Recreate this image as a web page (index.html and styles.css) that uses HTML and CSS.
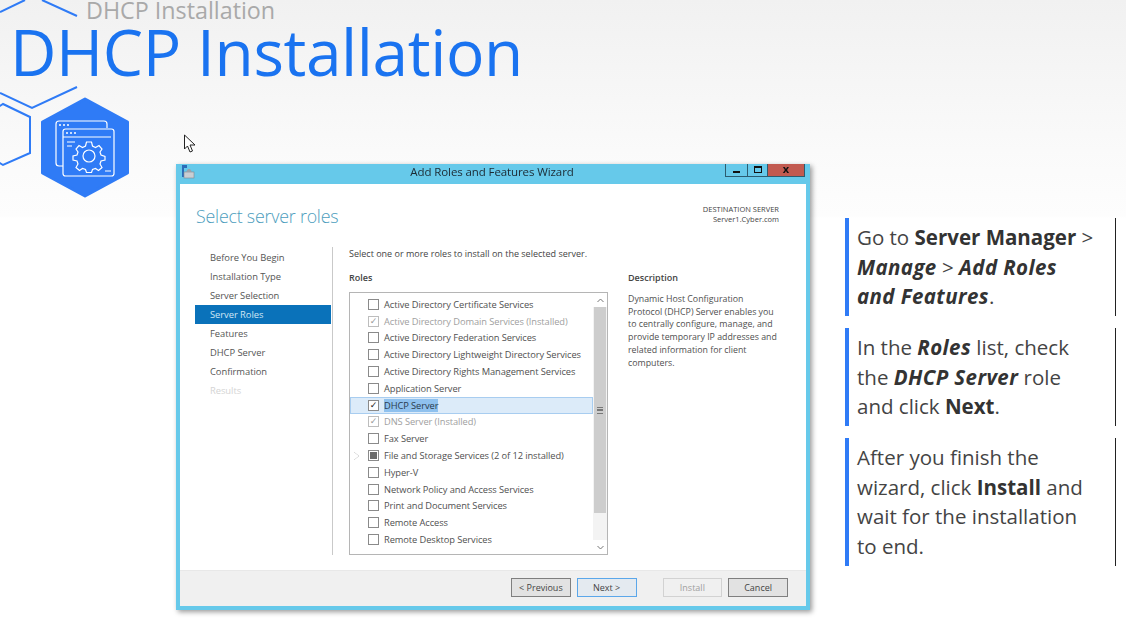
FILE: index.html
```html
<!DOCTYPE html>
<html lang="en">
<head>
<meta charset="utf-8">
<title>DHCP Installation</title>
<link rel="stylesheet" href="styles.css">
</head>
<body>
<div class="slide">
  <svg class="deco" width="135" height="205" viewBox="0 0 135 205" aria-hidden="true">
    <g fill="none" stroke="#2f7bf6" stroke-width="2">
      <path d="M0 12 25 0M42 0 77 16"/>
      <path d="M0 93 32 108 77 87"/>
      <path d="M-2 107 3 104 30 117V153L3 165-2 162"/>
    </g>
    <path d="M85 99 127.500 122V173L85 196 42.500 173V122Z" fill="#2f7bf6" stroke="#2f7bf6" stroke-width="3" stroke-linejoin="round"/>
    <g fill="none" stroke="#fff" stroke-width="1.2">
      <path d="M63 166H59Q56 166 56 163V124Q56 121 59 121H104Q107 121 107 124V128"/>
      <rect x="63" y="129" width="51" height="47" rx="2.5"/>
      <path d="M63 137H111M67 142H75M67 146H72M105 171H111"/>
      <circle cx="89" cy="156" r="6"/>
      <path d="M86.500 142H91.500L92.500 146 95.500 147.500 99 145.500 102 149 100 152 101 155 105 156.500V160L101 161 100 164 102 167.500 98.500 170.500 95.500 168.500 92.500 169.500 91.500 172.500H86.500L85.500 169.500 82.500 168.500 79.500 170.500 76 167.500 78 164 77 161 73 160V156L77 155 78 152 76 149 79 145.500 82.500 147.500 85.500 146Z"/>
    </g>
    <g fill="#fff">
      <circle cx="60" cy="125" r="1"/><circle cx="64" cy="125" r="1"/><circle cx="68" cy="125" r="1"/>
      <circle cx="67" cy="133" r="1"/><circle cx="71" cy="133" r="1"/><circle cx="75" cy="133" r="1"/>
    </g>
  </svg>
  <svg class="cursor" width="14" height="20" viewBox="0 0 14 20" aria-hidden="true">
    <path d="M1.500 1V15L4.500 12 7 18 9.500 17 7 11H12Z" fill="#fff" stroke="#222" stroke-width="1"/>
  </svg>

  <header class="head">
    <div class="crumb">DHCP Installation</div>
    <h1 class="title">DHCP Installation</h1>
  </header>

  <main class="content">
    <section class="wizard">
      <div class="titlebar">
        <svg class="appicon" width="14" height="14" viewBox="0 0 14 14" aria-hidden="true">
          <rect x="1" y="0" width="5" height="3" fill="#2b6cb8"/>
          <rect x="1" y="3" width="2" height="9" fill="#2b6cb8"/>
          <rect x="3" y="7" width="10" height="6" fill="#c9ced3" stroke="#7f8790" stroke-width=".6"/>
          <path d="M5 7 7 4H9L11 7Z" fill="#9aa2aa"/>
        </svg>
        <div class="wintitle">Add Roles and Features Wizard</div>
        <div class="winbtns">
          <span class="winbtn min"><i></i></span>
          <span class="winbtn max"><i></i></span>
          <span class="winbtn close">x</span>
        </div>
      </div>
      <div class="winbody">
        <div class="winhead">
          <h2 class="pagetitle">Select server roles</h2>
          <div class="dest">DESTINATION SERVER<br>Server1.Cyber.com</div>
        </div>
        <div class="winmain">
          <nav class="steps">
            <div class="step">Before You Begin</div>
            <div class="step">Installation Type</div>
            <div class="step">Server Selection</div>
            <div class="step active">Server Roles</div>
            <div class="step">Features</div>
            <div class="step">DHCP Server</div>
            <div class="step">Confirmation</div>
            <div class="step off">Results</div>
          </nav>
          <div class="panel">
            <p class="intro">Select one or more roles to install on the selected server.</p>
            <div class="columns">
              <div class="rolescol">
                <div class="label">Roles</div>
                <div class="listbox">
                  <div class="rows">
                    <div class="row"><span class="cb"></span>Active Directory Certificate Services</div>
                    <div class="row dim"><span class="cb on">✓</span>Active Directory Domain Services (Installed)</div>
                    <div class="row"><span class="cb"></span>Active Directory Federation Services</div>
                    <div class="row"><span class="cb"></span>Active Directory Lightweight Directory Services</div>
                    <div class="row"><span class="cb"></span>Active Directory Rights Management Services</div>
                    <div class="row"><span class="cb"></span>Application Server</div>
                    <div class="row sel"><span class="cb on">✓</span><span class="hl">DHCP Server</span></div>
                    <div class="row dim"><span class="cb on">✓</span>DNS Server (Installed)</div>
                    <div class="row"><span class="cb"></span>Fax Server</div>
                    <div class="row"><span class="tri"></span><span class="cb part"><i></i></span>File and Storage Services (2 of 12 installed)</div>
                    <div class="row"><span class="cb"></span>Hyper-V</div>
                    <div class="row"><span class="cb"></span>Network Policy and Access Services</div>
                    <div class="row"><span class="cb"></span>Print and Document Services</div>
                    <div class="row"><span class="cb"></span>Remote Access</div>
                    <div class="row"><span class="cb"></span>Remote Desktop Services</div>
                  </div>
                  <div class="scroll">
                    <div class="arrow">
                      <svg width="7" height="5" viewBox="0 0 7 5"><path d="M.5 4 3.500 1 6.500 4" fill="none" stroke="#777"/></svg>
                    </div>
                    <div class="thumb"><i></i></div>
                    <div class="track"></div>
                    <div class="arrow">
                      <svg width="7" height="5" viewBox="0 0 7 5"><path d="M.5 1 3.500 4 6.500 1" fill="none" stroke="#777"/></svg>
                    </div>
                  </div>
                </div>
              </div>
              <div class="desccol">
                <div class="label">Description</div>
                <p class="desc">Dynamic Host Configuration Protocol (DHCP) Server enables you to centrally configure, manage, and provide temporary IP addresses and related information for client computers.</p>
              </div>
            </div>
          </div>
        </div>
        <div class="winfoot">
          <span class="btn">&lt; Previous</span>
          <span class="btn primary">Next &gt;</span>
          <span class="btn disabled gapl">Install</span>
          <span class="btn">Cancel</span>
        </div>
      </div>
    </section>

    <aside class="notes">
      <div class="note">Go to <b>Server Manager</b> &gt; <b><i>Manage</i></b> &gt; <b><i>Add Roles and Features</i></b>.</div>
      <div class="note">In the <b><i>Roles</i></b> list, check the <b><i>DHCP Server</i></b> role and click <b>Next</b>.</div>
      <div class="note">After you finish the wizard, click <b>Install</b> and wait for the installation to end.</div>
    </aside>
  </main>
</div>
</body>
</html>
```
FILE: styles.css
```css
* { box-sizing: border-box; }
html, body { margin: 0; padding: 0; }
body { font-family: "Open Sans", "Noto Sans", sans-serif; background: #fff; }

.slide {
  position: relative;
  width: 1126px;
  height: 623px;
  overflow: hidden;
  background: linear-gradient(180deg, #f1f1f1 0, #fafafa 150px, #fdfdfd 216px, #fff 218px);
}
.deco { position: absolute; left: 0; top: 0; }
.cursor { position: absolute; left: 183px; top: 134px; }

.head { height: 164px; padding-left: 10px; }
.crumb {
  padding-left: 76px;
  height: 22px;
  font-size: 23.300px;
  line-height: 20px;
  color: #a9a9a9;
}
.title {
  margin: 0;
  font-size: 64px;
  line-height: 60px;
  font-weight: 400;
  color: #1a73f0;
  letter-spacing: -.4px;
}

.content { display: flex; padding-left: 176px; }

/* wizard window */
.wizard {
  width: 634px;
  height: 446px;
  background: #66c9ea;
  padding: 0 4px 4px;
  box-shadow: 2px 2px 5px rgba(0,0,0,.4);
  filter: blur(.35px);
  display: flex;
  flex-direction: column;
  color: #444;
}
.titlebar { position: relative; height: 20px; flex: none; }
.appicon { position: absolute; left: 1px; top: 1px; }
.wintitle { text-align: center; font-size: 11.500px; line-height: 16px; color: #1c2a33; letter-spacing: -.1px; padding-right: 2px; }
.winbtns { position: absolute; right: 1px; top: 0; display: flex; height: 13px; border: 1px solid #2c5c70; border-top: 0; }
.winbtn { display: flex; align-items: center; justify-content: center; }
.min { width: 22px; border-right: 1px solid #2c5c70; }
.min i { width: 7px; height: 2px; background: #111; margin-top: 3px; }
.max { width: 20px; border-right: 1px solid #2c5c70; }
.max i { width: 8px; height: 7px; border: 1.500px solid #111; border-top-width: 2px; margin-top: -2px; }
.close { width: 36px; background: #c25a50; color: #111; font-size: 11px; font-weight: 700; line-height: 9px; padding-bottom: 3px; }

.winbody { flex: 1; background: #fff; display: flex; flex-direction: column; min-height: 0; }
.winhead { height: 62px; padding: 20px 27px 0 16px; display: flex; justify-content: space-between; align-items: flex-start; }
.pagetitle { margin: 0; font-size: 17.800px; line-height: 24px; font-weight: 300; color: #4c9dbd; letter-spacing: -.2px; }
.dest { font-size: 7.500px; line-height: 10.200px; text-align: right; color: #444; }

.winmain { flex: 1; display: flex; min-height: 0; padding-left: 15px; }
.steps { width: 138px; height: 308px; padding-top: 1px; border-right: 1px solid #c9c9c9; margin-top: 1px; flex: none; padding-right: 1px; }
.step { height: 19px; line-height: 19px; font-size: 9.400px; padding-left: 15px; color: #555; letter-spacing: -.05px; }
.step.active { background: #0a72ba; color: #cfe6f5; }
.step.off { color: #d4d4d4; }

.panel { flex: 1; padding-left: 16px; padding-top: 2px; }
.intro { margin: 0; height: 24px; font-size: 9px; line-height: 12px; color: #444; }
.columns { display: flex; }
.rolescol { width: 259px; }
.desccol { margin-left: 20px; width: 150px; }
.label { height: 20px; font-size: 9px; line-height: 12px; font-weight: 600; color: #444; }

.listbox { display: flex; height: 263px; border: 1px solid #b5b5b5; }
.rows { flex: 1; padding-top: 3px; }
.row { position: relative; height: 16.800px; padding-left: 18px; display: flex; align-items: center; font-size: 9.300px; color: #505050; letter-spacing: -.08px; white-space: nowrap; }
.row.dim { color: #a0a0a0; }
.row.sel { background: #dcebf9; outline: 1px solid #a8cdf0; outline-offset: -1px; }
.hl { background: #8fc1ee; color: #2a3b4c; }
.cb { width: 11px; height: 11px; flex: none; margin-right: 5px; border: 1px solid #8a8a8a; background: #fff; display: flex; align-items: center; justify-content: center; font-size: 9px; line-height: 9px; font-family: "DejaVu Sans", sans-serif; font-weight: 700; color: #222; }
.dim .cb { border-color: #bdbdbd; color: #9a9a9a; }
.cb.part i { width: 7px; height: 7px; background: #6b6b6b; }
.tri { position: absolute; left: 4px; top: 5px; width: 0; height: 0; border-left: 5px solid #fff; border-top: 4px solid transparent; border-bottom: 4px solid transparent; filter: drop-shadow(0 0 .6px #666); }

.scroll { width: 14px; flex: none; display: flex; flex-direction: column; background: #f3f3f3; }
.arrow { height: 14px; flex: none; display: flex; align-items: center; justify-content: center; background: #fff; }
.thumb { height: 206px; flex: none; background: #cdcdcd; display: flex; align-items: center; justify-content: center; margin: 0 1px; }
.thumb i { width: 6px; height: 7px; border-top: 1px solid #777; border-bottom: 1px solid #777; background: linear-gradient(#cdcdcd 0 1.500px, #777 1.500px 3px, #cdcdcd 3px); }
.track { flex: 1; }

.desc { margin: 1px 0 0; font-size: 8.800px; line-height: 12.700px; color: #505050; }

.winfoot { height: 36px; flex: none; background: #f0f0f0; border-top: 1px solid #e8e8e8; display: flex; align-items: flex-start; padding: 7px 18px 0 331px; gap: 6px; }
.btn { width: 60px; height: 19px; background: #e2e2e2; border: 1px solid #7f7f7f; font-size: 9px; line-height: 17px; text-align: center; color: #444; }
.btn.primary { background: #e4eaf0; border-color: #5ba7ea; }
.btn.disabled { background: #f0f0f0; border-color: #d2d2d2; color: #a0a0a0; }
.gapl { margin-left: 20px; }

/* side notes */
.notes { margin-left: 35px; margin-top: 54px; width: 271px; display: flex; flex-direction: column; gap: 12px; }
.note {
  border-left: 4.500px solid #2f7bf6;
  border-right: 1.500px solid #222;
  padding: 5px 17px 0 8px;
  font-size: 20.500px;
  line-height: 29.500px;
  color: #444;
  height: 98px;
}
.note:last-child { height: 128px; }
.note b { font-weight: 700; color: #333; }
.note b i { letter-spacing: .4px; }
```
